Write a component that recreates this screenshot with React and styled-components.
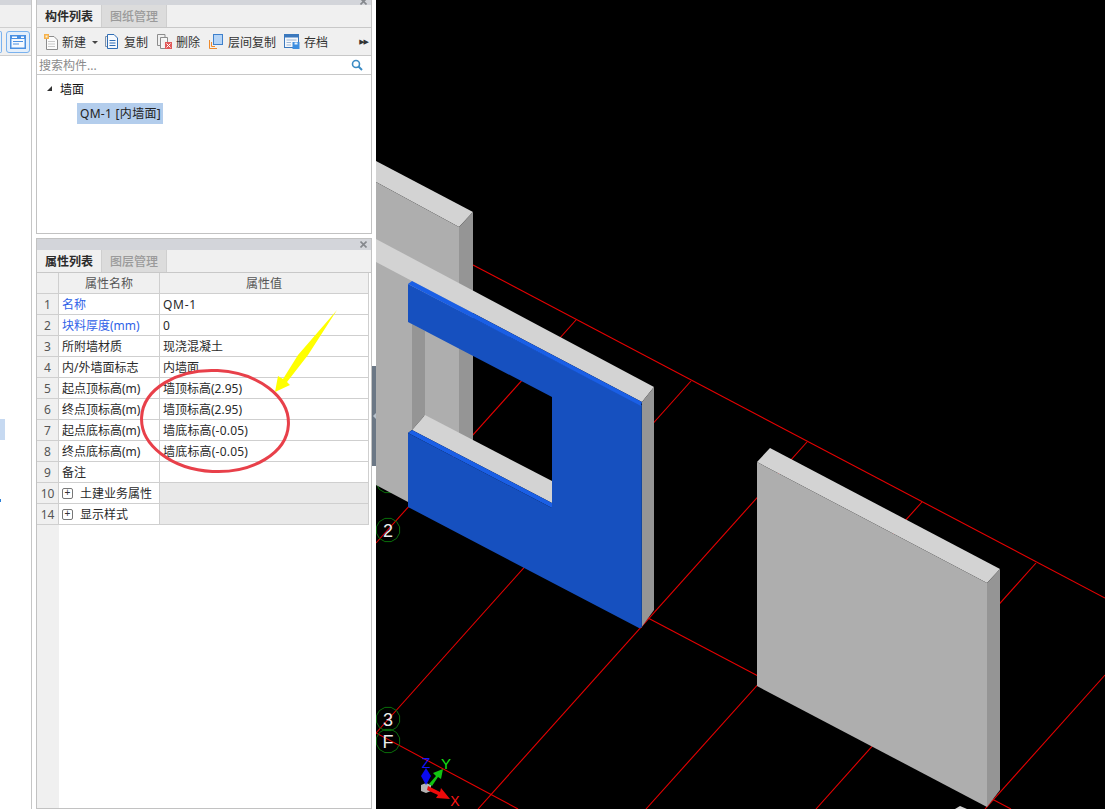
import styled, { createGlobalStyle } from "styled-components";

const GlobalStyle = createGlobalStyle`
  html, body {
    margin: 0;
    padding: 0;
    height: 809px;
    overflow: hidden;
    background: #ffffff;
  }
  * { box-sizing: border-box; }
  body {
    font-family: "Noto Sans", "Noto Sans CJK SC", sans-serif;
    font-size: 12px;
    color: #222;
  }
`;

const Page = styled.div`
  position: relative;
  display: flex;
  width: 1105px;
  height: 809px;
  overflow: hidden;
`;

const SideDock = styled.div`
  width: 32px;
  height: 100%;
  border-right: 1px solid #c6c6c6;
  display: flex;
  flex-direction: column;
`;

const DockHeader = styled.div`
  height: 5px;
  background: #d3d5da;
`;

const DockTabs = styled.div`
  height: 23px;
  background: #f0f0f0;
  border-bottom: 1px solid #cfcfcf;
`;

const DockTools = styled.div`
  height: 28px;
  background: #f0f0f0;
  border-bottom: 1px solid #cfcfcf;
  display: flex;
  align-items: center;
  gap: 4px;
`;

const DockButton = styled.div`
  width: ${(p) => p.$w}px;
  height: 22px;
  background: #e4effb;
  border: 1px solid #7ab2ee;
  border-radius: ${(p) => (p.$cut ? "0 3px 3px 0" : "3px")};
  border-left: ${(p) => (p.$cut ? "none" : "1px solid #7ab2ee")};
  display: flex;
  align-items: center;
  justify-content: center;
`;

const DockList = styled.div`
  flex: 1;
  padding-top: 363px;
`;

const DockSelected = styled.div`
  width: 5px;
  height: 21px;
  background: #c6d9f1;
`;

const DockMark = styled.div`
  width: 1px;
  height: 3px;
  margin-top: 59px;
  background: #2a80d8;
`;

const Middle = styled.div`
  width: 340px;
  height: 100%;
  padding-left: 4px;
  display: flex;
  flex-direction: column;
  gap: 4px;
`;

const Panel = styled.div`
  display: flex;
  flex-direction: column;
  width: 336px;
  height: ${(p) => p.$h}px;
  border: 1px solid #c2c2c2;
  border-top: ${(p) => (p.$open ? "none" : "1px solid #c2c2c2")};
  background: #ffffff;
`;

const PanelHeader = styled.div`
  height: ${(p) => p.$h}px;
  background: #d3d5da;
  display: flex;
  justify-content: flex-end;
  align-items: ${(p) => (p.$cut ? "flex-end" : "center")};
  padding-right: 4px;
  overflow: hidden;
  flex: none;
`;

const TabBar = styled.div`
  height: 23px;
  flex: none;
  display: flex;
  background: #f0f0f0;
  border-bottom: 1px solid #c8c8c8;
`;

const Tab = styled.div`
  width: 65px;
  display: flex;
  align-items: center;
  justify-content: center;
  font-weight: ${(p) => (p.$active ? 600 : 500)};
  color: ${(p) => (p.$active ? "#2b2b2b" : "#9a9a9a")};
  background: ${(p) => (p.$active ? "#f0f0f0" : "#dcdcdc")};
  border-right: 1px solid #cfcfcf;
`;

const Toolbar = styled.div`
  height: 28px;
  flex: none;
  display: flex;
  align-items: center;
  background: #f0f0f0;
  border-bottom: 1px solid #c8c8c8;
  padding-left: 6px;
  color: #333;
`;

const ToolButton = styled.div`
  display: flex;
  align-items: center;
  gap: ${(p) => p.$gap ?? 4}px;
  margin-right: ${(p) => p.$right ?? 8}px;
  line-height: 1;
`;

const ToolLabel = styled.span`
  padding-top: 2px;
`;

const Caret = styled.span`
  width: 0;
  height: 0;
  margin: 1px 7px 0 6px;
  border-left: 3px solid transparent;
  border-right: 3px solid transparent;
  border-top: 3px solid #444;
`;

const MoreArrows = styled.span`
  margin-left: auto;
  margin-right: 3px;
  font-family: "DejaVu Sans", sans-serif;
  font-size: 7px;
  letter-spacing: -1px;
  color: #333;
`;

const SearchRow = styled.div`
  height: 19px;
  flex: none;
  display: flex;
  align-items: center;
  justify-content: space-between;
  padding: 0 8px 0 2px;
  border-bottom: 1px solid #c8c8c8;
  color: #8a8a8a;
`;

const TreeArea = styled.div`
  flex: 1;
  padding: 3px 0 0 10px;
`;

const TreeRoot = styled.div`
  display: flex;
  align-items: center;
  height: 21px;
  gap: 8px;
  color: #111;
`;

const TreeTriangle = styled.span`
  width: 0;
  height: 0;
  border-left: 5px solid transparent;
  border-bottom: 5px solid #333;
`;

const TreeItem = styled.div`
  width: 86px;
  height: 21px;
  margin: 4px 0 0 30px;
  padding: 0 0 1px 3px;
  display: flex;
  align-items: center;
  white-space: nowrap;
  letter-spacing: 0.3px;
  background: #b3cdec;
  color: #222;
`;

const GridRow = styled.div`
  display: grid;
  grid-template-columns: 22px 101px 209px;
  height: 21px;
  flex: none;
`;

const GridFill = styled.div`
  display: grid;
  grid-template-columns: 22px 1fr;
  flex: 1;
`;

const Cell = styled.div`
  display: flex;
  align-items: center;
  justify-content: ${(p) => (p.$center ? "center" : "flex-start")};
  gap: 7px;
  padding-left: ${(p) => (p.$center ? 0 : 3)}px;
  white-space: nowrap;
  letter-spacing: ${(p) => p.$track ?? 0}px;
  border-right: 1px solid #cfcfcf;
  border-bottom: 1px solid #cfcfcf;
  color: ${(p) => (p.$blue ? "#2f62e8" : p.$head ? "#555" : "#2a2a2a")};
  background: ${(p) => (p.$head ? "#f0f0f0" : p.$shade ? "#e9e9e9" : "#ffffff")};
`;

const GutterFill = styled.div`
  background: #f0f0f0;
`;

const PlusBox = styled.span`
  width: 11px;
  height: 11px;
  border: 1px solid #777;
  border-radius: 2px;
  display: flex;
  align-items: center;
  justify-content: center;
  font-family: "Liberation Sans", sans-serif;
  font-size: 10px;
  line-height: 1;
  color: #333;
  background: #fff;
`;

const SplitterColumn = styled.div`
  width: 4px;
  height: 100%;
  padding-top: 366px;
`;

const SplitterGrip = styled.div`
  width: 4px;
  height: 100px;
  background: #6b7785;
  display: flex;
  align-items: center;
  justify-content: center;
  &::before {
    content: "";
    width: 0;
    height: 0;
    border-top: 3px solid transparent;
    border-bottom: 3px solid transparent;
    border-right: 3px solid #b8c2cc;
  }
`;

const Viewport = styled.div`
  flex: 1;
  height: 100%;
  background: #000000;
`;

const Drawing = styled.svg`
  display: block;
`;

const Annotation = styled.svg`
  position: absolute;
  left: 0;
  top: 0;
  pointer-events: none;
`;

const redLines = [
  [473, 265, 1105, 598],
  [576, 320, 376, 543],
  [691, 381, 376, 733],
  [807, 442, 478, 809],
  [922, 502, 646, 809],
  [1036, 563, 816, 809],
  [1105, 675, 985, 809],
  [376, 733, 518, 809],
  [648, 618, 1011, 809],
];

const bubbles = [
  { y: 481, label: "" },
  { y: 530, label: "2" },
  { y: 719, label: "3" },
  { y: 741, label: "F" },
];

const rows = [
  { no: 1, name: "名称", value: "QM-1", blue: true, track: 0.7 },
  { no: 2, name: "块料厚度(mm)", value: "0", blue: true },
  { no: 3, name: "所附墙材质", value: "现浇混凝土" },
  { no: 4, name: "内/外墙面标志", value: "内墙面" },
  { no: 5, name: "起点顶标高(m)", value: "墙顶标高(2.95)" },
  { no: 6, name: "终点顶标高(m)", value: "墙顶标高(2.95)" },
  { no: 7, name: "起点底标高(m)", value: "墙底标高(-0.05)", track: 0.2 },
  { no: 8, name: "终点底标高(m)", value: "墙底标高(-0.05)", track: 0.2 },
  { no: 9, name: "备注", value: "" },
];

const groups = [
  { no: 10, name: "土建业务属性" },
  { no: 14, name: "显示样式" },
];

// axis bubbles are many-sided polygons in the cad view
const bubblePoints = (cx, cy) =>
  Array.from({ length: 12 }, (_, i) => {
    const a = ((i + 0.5) * Math.PI) / 6;
    return `${(cx + 12 * Math.cos(a)).toFixed(1)},${(cy + 12 * Math.sin(a)).toFixed(1)}`;
  }).join(" ");

function Scene() {
  return (
    <Drawing width="729" height="809" viewBox="376 0 729 809">
      {redLines.map((l, i) => (
        <line key={i} x1={l[0]} y1={l[1]} x2={l[2]} y2={l[3]} stroke="#e60000" strokeWidth="1.1" />
      ))}

      {bubbles.map((b) => (
        <g key={b.y}>
          <polygon points={bubblePoints(388, b.y)} fill="none" stroke="#0a6e0a" strokeWidth="1" />
          {b.label && (
            <text x="388" y={b.y + 7} textAnchor="middle" fill="#ececec" fontFamily="Liberation Sans" fontSize="18">
              {b.label}
            </text>
          )}
        </g>
      ))}

      {/* back wall */}
      <polygon points="376,161 473,212 459,227 376,182" fill="#d3d3d3" />
      <polygon points="376,182 459,227 459,434 376,390" fill="#aeaeae" />
      <polygon points="459,227 473,212 473,441 459,434" fill="#959595" />

      {/* front wall with opening, left part */}
      <polygon points="376,262 412,281 412,430 408,433 408,502 376,485" fill="#aeaeae" />
      <polygon points="412,324 425,331 425,415 412,430" fill="#959595" />
      <polygon points="376,239 654,387 642,402 412,281 376,262" fill="#d3d3d3" />
      <polygon points="412,430 425,415 552,481 552,503" fill="#d3d3d3" />
      <polygon points="642,402 654,387 654,610 641,628" fill="#959595" />

      {/* blue face */}
      <polygon
        points="408,284 641,405 641,628 639,628 408,507 408,433 552,508 552,397 408,322"
        fill="#1650bf"
      />
      <polygon points="408,284 412,281 642,402 641,406" fill="#1a5fe6" />
      <polygon points="408,433 412,430 552,503 552,508" fill="#1a5fe6" />
      <line x1="641.5" y1="405" x2="641.5" y2="627" stroke="#14479f" strokeWidth="1" />

      {/* second wall */}
      <polygon points="757,462 770,448 1000,569 987,583" fill="#d3d3d3" />
      <polygon points="757,462 987,583 987,807 757,686" fill="#aeaeae" />
      <polygon points="987,583 1000,569 1000,790 987,807" fill="#959595" />
      <polygon points="955,809 960,806 967,809" fill="#d3d3d3" />

      {/* axes */}
      <polygon points="421,785 426,783 431,785 431,791 426,793 421,791" fill="#b4b4b4" />
      <path d="M426 768 L431 776 L426 785 L421 776 Z" fill="#0a0aee" />
      <path d="M429 784 L436 776 L433 773 L443 769 L441 779 L438 777 L432 786 Z" fill="#12c412" />
      <path d="M428 786 L440 792 L441 788 L450 799 L436 798 L438 795 L427 790 Z" fill="#ee0a0a" />
      <text x="426" y="768" textAnchor="middle" fill="#1414ff" fontFamily="Liberation Sans" fontSize="14">Z</text>
      <text x="446" y="769" textAnchor="middle" fill="#14e014" fontFamily="Liberation Sans" fontSize="15">Y</text>
      <text x="455" y="806" textAnchor="middle" fill="#ff1414" fontFamily="Liberation Sans" fontSize="14">X</text>
    </Drawing>
  );
}

function CloseIcon() {
  return (
    <svg width="7" height="7" viewBox="0 0 7 7">
      <path d="M0.5 0.5 L6.5 6.5 M6.5 0.5 L0.5 6.5" stroke="#85888d" strokeWidth="1.6" />
    </svg>
  );
}

function NewIcon() {
  return (
    <svg width="16" height="18" viewBox="0 0 16 18">
      <path d="M3.5 3.5 H11 L14.5 7 V16.5 H3.5 Z" fill="#fbfbfb" stroke="#8c8c8c" />
      <path d="M5 8.5 H12 M5 11 H12 M5 13.5 H12" stroke="#c9c9c9" />
      <rect x="1" y="1" width="5" height="5" fill="#f5b04a" />
      <rect x="2.5" y="2.5" width="2" height="2" fill="#fdf0d0" />
    </svg>
  );
}

function CopyIcon() {
  return (
    <svg width="13" height="15" viewBox="0 0 13 15">
      <path d="M0.5 2.5 H2.5 M0.5 2.5 V12.5 H2.5" fill="none" stroke="#7f93ad" />
      <path d="M2.5 0.5 H9 L12.5 4 V14.5 H2.5 Z" fill="#f6f9fd" stroke="#2f6db5" />
      <path d="M4.5 6.5 H10.5 M4.5 9 H10.5 M4.5 11.5 H10.5" stroke="#2f6db5" />
    </svg>
  );
}

function DeleteIcon() {
  return (
    <svg width="15" height="15" viewBox="0 0 15 15">
      <path d="M0.5 0.5 H8 V3 M0.5 0.5 V11.5 H4" fill="none" stroke="#8c8c8c" />
      <path d="M3.5 3.5 H10.5 V8 M3.5 3.5 V14.5 H8" fill="#f7f7f7" stroke="#8c8c8c" />
      <rect x="8" y="8" width="7" height="7" fill="#e25a5a" />
      <path d="M9.5 9.5 L13.5 13.5 M13.5 9.5 L9.5 13.5" stroke="#fff" />
    </svg>
  );
}

function FloorCopyIcon() {
  return (
    <svg width="14" height="15" viewBox="0 0 14 15">
      <path d="M0.5 6 V14.5 H8" fill="none" stroke="#ee8a2c" strokeWidth="1" />
      <path d="M2.5 8 V12.5 H6" fill="none" stroke="#ee8a2c" strokeWidth="1" />
      <rect x="4.5" y="0.5" width="9" height="10" fill="#b5d4f6" stroke="#3e80cc" />
    </svg>
  );
}

function SaveIcon() {
  return (
    <svg width="16" height="15" viewBox="0 0 16 15">
      <rect x="0.5" y="0.5" width="14" height="13" fill="#f4f7fb" stroke="#3b78bd" />
      <rect x="0.5" y="0.5" width="14" height="3" fill="#3b78bd" />
      <path d="M2.5 6 H12.5 M2.5 8.5 H7 M2.5 11 H7" stroke="#9cb6d4" />
      <rect x="8.5" y="8" width="7" height="7" fill="#3c8ee0" />
      <rect x="10.5" y="8.5" width="3" height="2" fill="#e8f2fc" />
    </svg>
  );
}

function SearchIcon() {
  return (
    <svg width="12" height="12" viewBox="0 0 12 12">
      <circle cx="5" cy="5" r="3.5" fill="none" stroke="#3b8bc4" strokeWidth="1.6" />
      <path d="M7.5 7.5 L11 11" stroke="#3b8bc4" strokeWidth="2" />
    </svg>
  );
}

function WindowIcon() {
  return (
    <svg width="16" height="14" viewBox="0 0 16 14">
      <rect x="0" y="0" width="16" height="14" fill="#4a90e2" />
      <rect x="1.5" y="4" width="13" height="8.5" fill="#f5f9fe" />
      <rect x="2" y="1.5" width="5" height="1.5" fill="#fff" />
      <rect x="11" y="1.5" width="3" height="1.5" fill="#fff" />
      <path d="M3 6.5 H13 M3 9 H9" stroke="#4a90e2" />
    </svg>
  );
}

export default function App() {
  return (
    <Page>
      <GlobalStyle />

      <SideDock>
        <DockHeader />
        <DockTabs />
        <DockTools>
          <DockButton $w={2} $cut />
          <DockButton $w={24}>
            <WindowIcon />
          </DockButton>
        </DockTools>
        <DockList>
          <DockSelected />
          <DockMark />
        </DockList>
      </SideDock>

      <Middle>
        <Panel $h={234} $open>
          <PanelHeader $h={5} $cut>
            <CloseIcon />
          </PanelHeader>
          <TabBar>
            <Tab $active>构件列表</Tab>
            <Tab>图纸管理</Tab>
          </TabBar>
          <Toolbar>
            <ToolButton $gap={3} $right={0}>
              <NewIcon />
              <ToolLabel>新建</ToolLabel>
            </ToolButton>
            <Caret />
            <ToolButton $gap={6} $right={9}>
              <CopyIcon />
              <ToolLabel>复制</ToolLabel>
            </ToolButton>
            <ToolButton $right={9}>
              <DeleteIcon />
              <ToolLabel>删除</ToolLabel>
            </ToolButton>
            <ToolButton $gap={5}>
              <FloorCopyIcon />
              <ToolLabel>层间复制</ToolLabel>
            </ToolButton>
            <ToolButton>
              <SaveIcon />
              <ToolLabel>存档</ToolLabel>
            </ToolButton>
            <MoreArrows>▶▶</MoreArrows>
          </Toolbar>
          <SearchRow>
            搜索构件...
            <SearchIcon />
          </SearchRow>
          <TreeArea>
            <TreeRoot>
              <TreeTriangle />
              墙面
            </TreeRoot>
            <TreeItem>QM-1 [内墙面]</TreeItem>
          </TreeArea>
        </Panel>

        <Panel $h={571}>
          <PanelHeader $h={11}>
            <CloseIcon />
          </PanelHeader>
          <TabBar>
            <Tab $active>属性列表</Tab>
            <Tab>图层管理</Tab>
          </TabBar>
          <GridRow>
            <Cell $head $center />
            <Cell $head $center>属性名称</Cell>
            <Cell $head $center>属性值</Cell>
          </GridRow>
          {rows.map((r) => (
            <GridRow key={r.no}>
              <Cell $head $center>{r.no}</Cell>
              <Cell $blue={r.blue}>{r.name}</Cell>
              <Cell $track={r.track}>{r.value}</Cell>
            </GridRow>
          ))}
          {groups.map((g) => (
            <GridRow key={g.no}>
              <Cell $head $center>{g.no}</Cell>
              <Cell>
                <PlusBox>+</PlusBox>
                {g.name}
              </Cell>
              <Cell $shade />
            </GridRow>
          ))}
          <GridFill>
            <GutterFill />
          </GridFill>
        </Panel>
      </Middle>

      <SplitterColumn>
        <SplitterGrip />
      </SplitterColumn>

      <Viewport>
        <Scene />
      </Viewport>

      <Annotation width="376" height="520" viewBox="0 0 376 520">
        <ellipse cx="215" cy="421" rx="73.5" ry="50.5" transform="rotate(3 215 421)" fill="none" stroke="#e8404a" strokeWidth="3" />
        <polygon points="337,310 308,355 287,382 290,385 275,392 278,376 283,379 298,355" fill="#ffff00" />
      </Annotation>
    </Page>
  );
}
